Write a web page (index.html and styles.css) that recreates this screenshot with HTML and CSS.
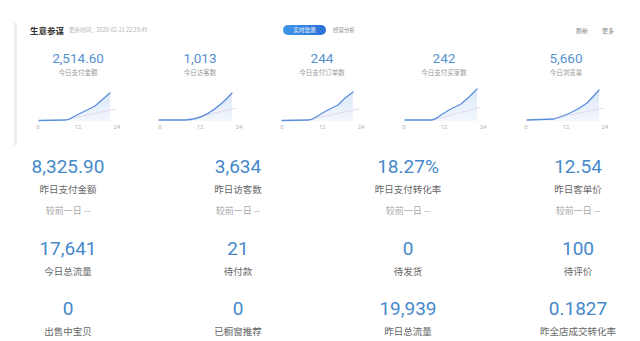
FILE: index.html
```html
<!DOCTYPE html>
<html lang="zh-CN">
<head>
<meta charset="utf-8">
<title>生意参谋</title>
<link rel="stylesheet" href="styles.css">
</head>
<body>
<div class="page">
  <section class="card">
    <header class="card-head">
      <div class="head-left">
        <span class="title">生意参谋</span>
        <span class="time">更新时间：2020-02-21 22:28:49</span>
      </div>
      <div class="tabs">
        <span class="tab active">实时监测</span>
        <span class="tab">经营分析</span>
      </div>
      <div class="head-right">
        <span class="link">刷新</span>
        <span class="link">更多</span>
      </div>
    </header>
    <div class="metrics">
      <div class="metric">
        <div class="m-value">2,514.60</div>
        <div class="m-label">今日支付金额</div>
        <svg class="chart" viewBox="0 0 90 52" width="90" height="52">
          <defs>
            <linearGradient id="fill" x1="0" y1="0" x2="0" y2="1">
              <stop offset="0" stop-color="#dbe8f9"/>
              <stop offset="1" stop-color="#f3f7fd"/>
            </linearGradient>
          </defs>
          <path class="area" d="M6 40.5 L32 40 Q36 40 40 37 L50 32 L62 26 L70 19 L77 13 L77 41 L6 41 Z"/>
          <path class="ref" d="M36 39 L83 29"/>
          <path class="line" d="M6 40.5 L32 40 Q36 40 40 37 L50 32 L62 26 L70 19 L77 13"/>
          <text x="5" y="49">0</text><text x="45" y="49">12</text><text x="84" y="49">24</text>
        </svg>
      </div>
      <div class="metric">
        <div class="m-value">1,013</div>
        <div class="m-label">今日访客数</div>
        <svg class="chart" viewBox="0 0 90 52" width="90" height="52">
          <path class="area" d="M4 40 L30 40 C45 40 60 32 77 13 L77 41 L4 41 Z"/>
          <path class="ref" d="M31 40 L81 28"/>
          <path class="line" d="M4 40 L30 40 C45 40 60 32 77 13"/>
          <text x="5" y="49">0</text><text x="45" y="49">12</text><text x="84" y="49">24</text>
        </svg>
      </div>
      <div class="metric">
        <div class="m-value">244</div>
        <div class="m-label">今日支付订单数</div>
        <svg class="chart" viewBox="0 0 90 52" width="90" height="52">
          <path class="area" d="M5 40.5 L31 40 Q35 40 39 37 L49 31 L61 25 L68 18 L76 12 L76 41 L5 41 Z"/>
          <path class="ref" d="M34 39 L82 29"/>
          <path class="line" d="M5 40.5 L31 40 Q35 40 39 37 L49 31 L61 25 L68 18 L76 12"/>
          <text x="5" y="49">0</text><text x="45" y="49">12</text><text x="84" y="49">24</text>
        </svg>
      </div>
      <div class="metric">
        <div class="m-value">242</div>
        <div class="m-label">今日支付买家数</div>
        <svg class="chart" viewBox="0 0 90 52" width="90" height="52">
          <path class="area" d="M6 40 L33 40 Q37 39 42 35 L50 30 L62 24 L70 17 L78 9 L78 41 L6 41 Z"/>
          <path class="ref" d="M34 40 L82 27"/>
          <path class="line" d="M6 40 L33 40 Q37 39 42 35 L50 30 L62 24 L70 17 L78 9"/>
          <text x="5" y="49">0</text><text x="45" y="49">12</text><text x="84" y="49">24</text>
        </svg>
      </div>
      <div class="metric">
        <div class="m-value">5,660</div>
        <div class="m-label">今日浏览量</div>
        <svg class="chart" viewBox="0 0 90 52" width="90" height="52">
          <path class="area" d="M6 40 L33 39 Q40 37 49 33 Q58 29 66 23 Q72 17 78 10 L78 41 L6 41 Z"/>
          <path class="ref" d="M34 38 L83 28"/>
          <path class="line" d="M6 40 L33 39 Q40 37 49 33 Q58 29 66 23 Q72 17 78 10"/>
          <text x="5" y="49">0</text><text x="45" y="49">12</text><text x="84" y="49">24</text>
        </svg>
      </div>
    </div>
  </section>

  <section class="stats">
    <div class="stat">
      <div class="s-value">8,325.90</div>
      <div class="s-label">昨日支付金额</div>
      <div class="s-compare">较前一日 --</div>
    </div>
    <div class="stat">
      <div class="s-value">3,634</div>
      <div class="s-label">昨日访客数</div>
      <div class="s-compare">较前一日 --</div>
    </div>
    <div class="stat">
      <div class="s-value">18.27%</div>
      <div class="s-label">昨日支付转化率</div>
      <div class="s-compare">较前一日 --</div>
    </div>
    <div class="stat">
      <div class="s-value">12.54</div>
      <div class="s-label">昨日客单价</div>
      <div class="s-compare">较前一日 --</div>
    </div>

    <div class="stat">
      <div class="s-value">17,641</div>
      <div class="s-label">今日总流量</div>
    </div>
    <div class="stat">
      <div class="s-value">21</div>
      <div class="s-label">待付款</div>
    </div>
    <div class="stat">
      <div class="s-value">0</div>
      <div class="s-label">待发货</div>
    </div>
    <div class="stat">
      <div class="s-value">100</div>
      <div class="s-label">待评价</div>
    </div>

    <div class="stat">
      <div class="s-value">0</div>
      <div class="s-label">出售中宝贝</div>
    </div>
    <div class="stat">
      <div class="s-value">0</div>
      <div class="s-label">已橱窗推荐</div>
    </div>
    <div class="stat">
      <div class="s-value">19,939</div>
      <div class="s-label">昨日总流量</div>
    </div>
    <div class="stat">
      <div class="s-value">0.1827</div>
      <div class="s-label">昨全店成交转化率</div>
    </div>
  </section>
</div>
</body>
</html>
```

FILE: styles.css
```css
* { box-sizing: border-box; }

html, body {
  margin: 0;
  padding: 0;
  background: #ffffff;
  overflow: hidden;
}

body {
  font-family: Roboto, "Noto Sans CJK SC", "Noto Sans", sans-serif;
  color: #666;
}

.page {
  width: 640px;
  height: 341px;
  padding-top: 18px;
}

/* ---------- top card ---------- */
.card {
  margin-left: 14px;
  width: 613px;
  height: 122px;
  border-left: 3px solid #ececec;
}

.card-head {
  display: grid;
  grid-template-columns: 1fr auto 1fr;
  align-items: center;
  height: 14px;
  margin-top: 5px;
  padding: 0 13px 0 13px;
}

.head-left {
  display: flex;
  align-items: center;
  gap: 5px;
}

.title {
  font-family: "Noto Sans CJK SC", sans-serif;
  font-size: 8.5px;
  font-weight: 700;
  color: #333;
}

.time {
  font-family: "Noto Sans CJK SC", sans-serif;
  font-size: 5.5px;
  color: #b4b4b4;
}

.tabs {
  display: flex;
  align-items: center;
  gap: 7px;
  margin-left: -6px;
}

.tab {
  font-family: "Noto Sans CJK SC", sans-serif;
  font-size: 5.5px;
  color: #888;
}

.tab.active {
  display: inline-flex;
  align-items: center;
  justify-content: center;
  width: 43px;
  height: 10px;
  border-radius: 5px;
  background: linear-gradient(90deg, #3f97e8, #2c6fd6);
  color: #fff;
}

.head-right {
  display: flex;
  justify-content: flex-end;
  gap: 14px;
}

.link {
  font-family: "Noto Sans CJK SC", sans-serif;
  font-size: 6px;
  color: #888;
}

.metrics {
  display: grid;
  grid-template-columns: repeat(5, 122px);
  margin-top: 12px;
}

.metric {
  display: flex;
  flex-direction: column;
  align-items: center;
}

.m-value {
  font-size: 13.5px;
  line-height: 18px;
  color: #5391cf;
}

.m-label {
  font-family: "Noto Sans CJK SC", sans-serif;
  font-size: 6.5px;
  line-height: 10px;
  color: #999;
}

.chart {
  display: block;
  margin-top: 3px;
  overflow: visible;
}

.chart .line {
  fill: none;
  stroke: #5b8fdc;
  stroke-width: 1.3;
  stroke-linejoin: round;
  stroke-linecap: round;
}

.chart .area {
  fill: url(#fill);
  stroke: none;
}

.chart .ref {
  fill: none;
  stroke: #e4d9ef;
  stroke-width: 1;
}

.chart text {
  font-family: Roboto, sans-serif;
  font-size: 6px;
  fill: #b4b4b4;
  text-anchor: middle;
}

/* ---------- bottom stats ---------- */
.stats {
  display: grid;
  grid-template-columns: repeat(4, 170px);
  row-gap: 19px;
  margin-top: 10px;
  margin-left: -17px;
}

.stat {
  display: flex;
  flex-direction: column;
  align-items: center;
}

.s-value {
  font-size: 19px;
  line-height: 24px;
  color: #4689ca;
}

.s-label {
  font-family: "Noto Sans CJK SC", sans-serif;
  font-size: 9.5px;
  line-height: 14px;
  margin-top: 3px;
  color: #666;
}

.s-compare {
  font-family: "Noto Sans CJK SC", sans-serif;
  font-size: 9px;
  line-height: 14px;
  margin-top: 8px;
  color: #a8a8a8;
}
```
